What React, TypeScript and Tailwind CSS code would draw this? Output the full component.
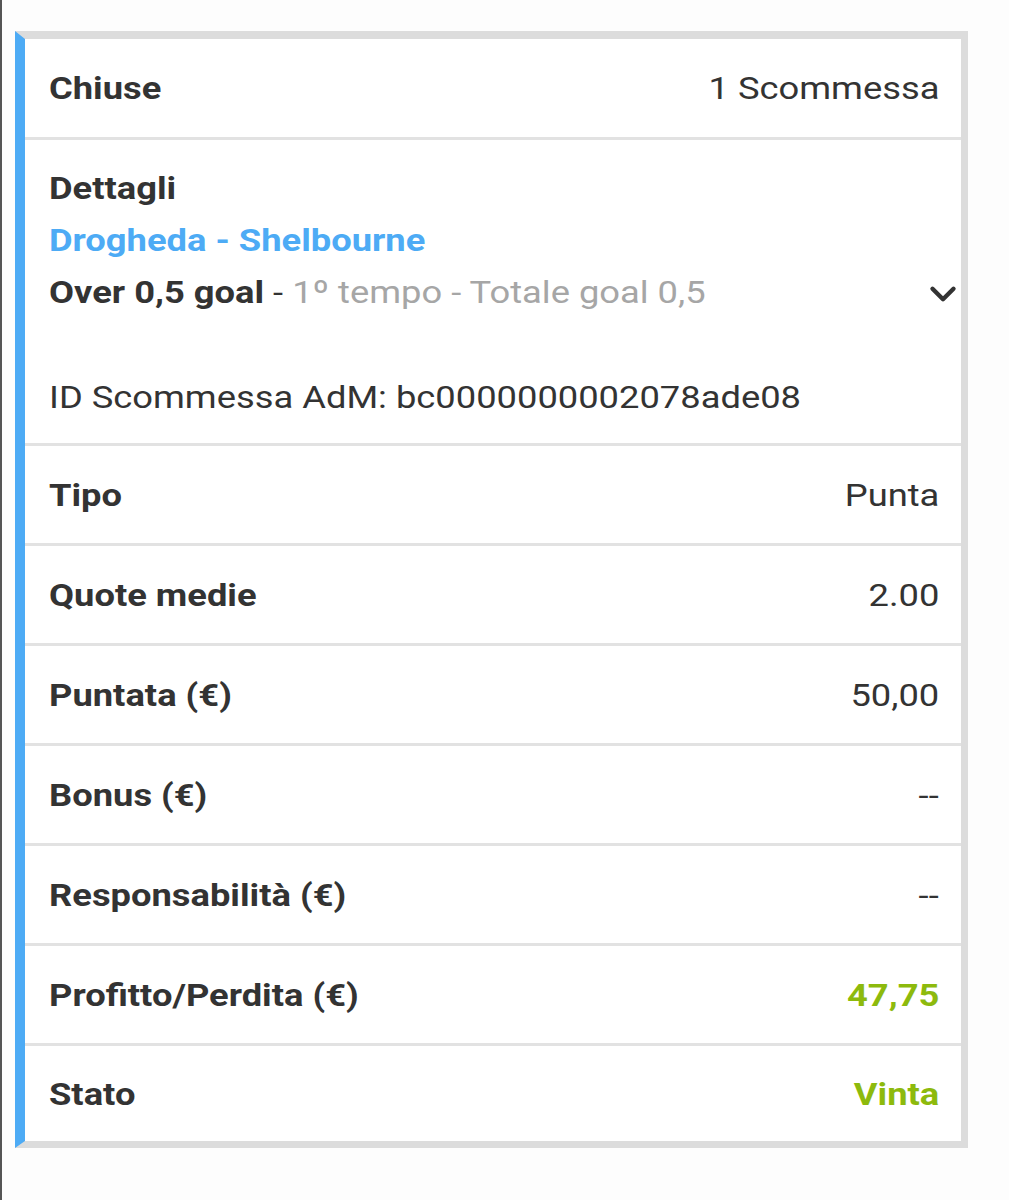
import { ChevronDown } from "lucide-react";

type Row = { label: string; value: string; tone?: "green" | "plain" };

const rows: Row[] = [
	{ label: "Tipo", value: "Punta" },
	{ label: "Quote medie", value: "2.00" },
	{ label: "Puntata (€)", value: "50,00" },
	{ label: "Bonus (€)", value: "--" },
	{ label: "Responsabilità (€)", value: "--" },
	{ label: "Profitto/Perdita (€)", value: "47,75", tone: "green" },
	{ label: "Stato", value: "Vinta", tone: "green" },
];

// the app text is rendered slightly wide, so stretch it horizontally
function Wide({ children, right, className = "" }: { children: React.ReactNode; right?: boolean; className?: string }) {
	return (
		<span className={`inline-block whitespace-nowrap scale-x-[1.135] ${right ? "origin-right" : "origin-left"} ${className}`}>
			{children}
		</span>
	);
}

function InfoRow({ label, value, tone = "plain", last }: Row & { last?: boolean }) {
	return (
		<div
			className={`flex items-center justify-between pl-6 pr-[22px] ${
				last ? "h-[95px]" : "h-[100px] border-b-[3px] border-[#e2e2e2]"
			}`}
		>
			<Wide className="font-bold">{label}</Wide>
			<Wide right className={tone === "green" ? "font-bold text-[#8dba0d]" : ""}>
				{value}
			</Wide>
		</div>
	);
}

export default function App() {
	return (
		<div className="min-h-[1200px] bg-[#fdfdfd] border-l-2 border-[#555] pt-[31px] pl-[13px] font-['Roboto',sans-serif] text-[32px] text-[#333]">
			<div className="w-[953px] bg-white border-l-[10px] border-l-[#4dabf5] border-t-8 border-r-[7px] border-b-[7px] border-t-[#dcdcdc] border-r-[#dcdcdc] border-b-[#dcdcdc]">
				<div className="flex items-center justify-between h-[101px] pl-6 pr-[22px] border-b-[3px] border-[#e2e2e2]">
					<Wide className="font-bold">Chiuse</Wide>
					<Wide right>1 Scommessa</Wide>
				</div>

				<div className="relative pt-[22px] pb-[20px] pl-6 pr-[22px] leading-[52px] border-b-[3px] border-[#e2e2e2]">
					<p>
						<Wide className="font-bold">Dettagli</Wide>
					</p>
					<p>
						<Wide className="font-bold text-[#4dabf5]">Drogheda - Shelbourne</Wide>
					</p>
					<p>
						<Wide>
							<span className="font-bold">Over 0,5 goal</span>
							<span> - </span>
							<span className="text-[#a6a6a6]">1º tempo - Totale goal 0,5</span>
						</Wide>
					</p>
					<p className="mt-[53px]">
						<Wide>ID Scommessa AdM: bc0000000002078ade08</Wide>
					</p>
					<ChevronDown
						className="absolute right-[-3px] top-[133px] w-[42px] h-[42px] text-[#333]"
						strokeWidth={2.5}
					/>
				</div>

				{rows.map((r, i) => (
					<InfoRow key={r.label} {...r} last={i === rows.length - 1} />
				))}
			</div>
		</div>
	);
}
